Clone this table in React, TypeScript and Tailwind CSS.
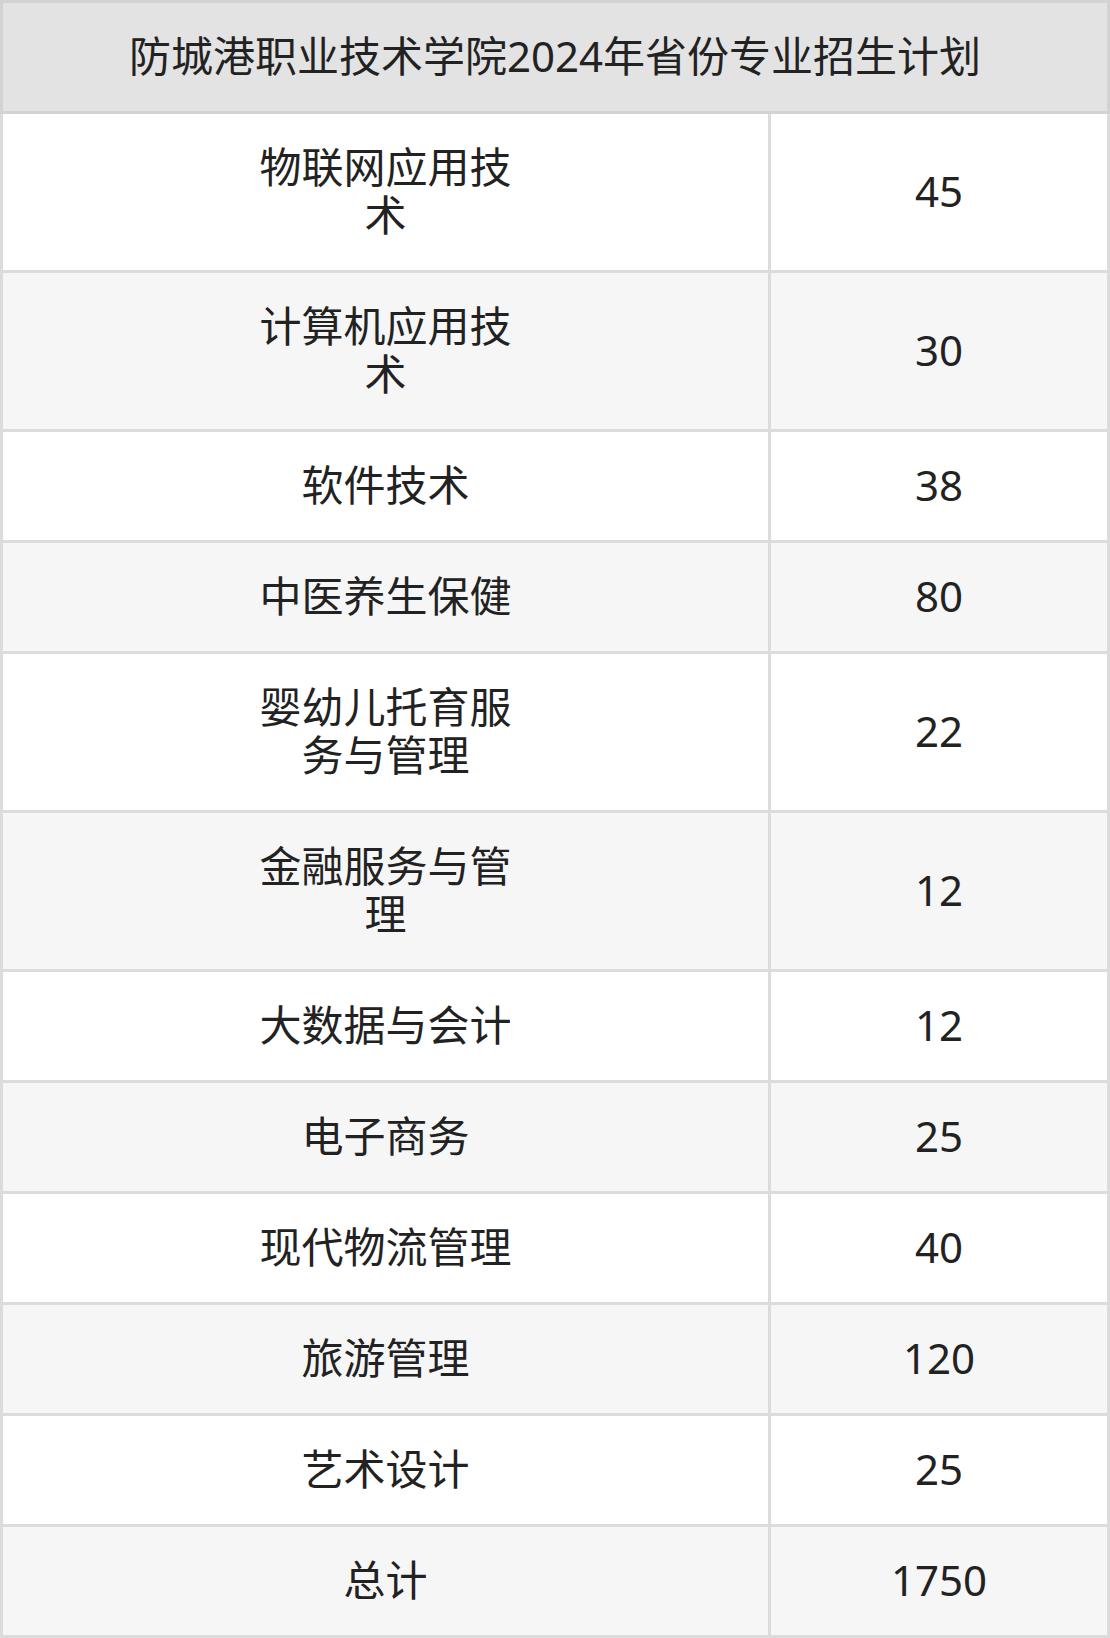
const rows: { name: string; count: string }[] = [
  { name: "物联网应用技术", count: "45" },
  { name: "计算机应用技术", count: "30" },
  { name: "软件技术", count: "38" },
  { name: "中医养生保健", count: "80" },
  { name: "婴幼儿托育服务与管理", count: "22" },
  { name: "金融服务与管理", count: "12" },
  { name: "大数据与会计", count: "12" },
  { name: "电子商务", count: "25" },
  { name: "现代物流管理", count: "40" },
  { name: "旅游管理", count: "120" },
  { name: "艺术设计", count: "25" },
  { name: "总计", count: "1750" },
];

export default function App() {
  return (
    <div
      className="w-[1110px] bg-white text-[#222222] text-[42px] leading-[48px]"
      style={{ fontFamily: '"Noto Sans", "Noto Sans CJK SC", sans-serif' }}
    >
      <table className="w-full border-collapse table-fixed">
        <colgroup>
          <col className="w-[768px]" />
          <col />
        </colgroup>
        <thead>
          <tr className="bg-[#e3e3e3]">
            <th
              colSpan={2}
              className="border-[3px] border-[#d3d3d3] h-[111px] pt-0 pb-[2px] px-0 text-center font-normal"
            >
              防城港职业技术学院2024年省份专业招生计划
            </th>
          </tr>
        </thead>
        <tbody>
          {rows.map((r, i) => (
            <tr key={r.name} className={i % 2 === 0 ? "bg-white" : "bg-[#f6f6f6]"}>
              <td className="border-[3px] border-[#dcdcdc] pt-[29px] pb-[31px] px-0 text-center align-middle">
                <div className="mx-auto max-w-[264px]">{r.name}</div>
              </td>
              <td className="border-[3px] border-[#dcdcdc] pt-[29px] pb-[31px] px-0 text-center align-middle">
                {r.count}
              </td>
            </tr>
          ))}
        </tbody>
      </table>
    </div>
  );
}
